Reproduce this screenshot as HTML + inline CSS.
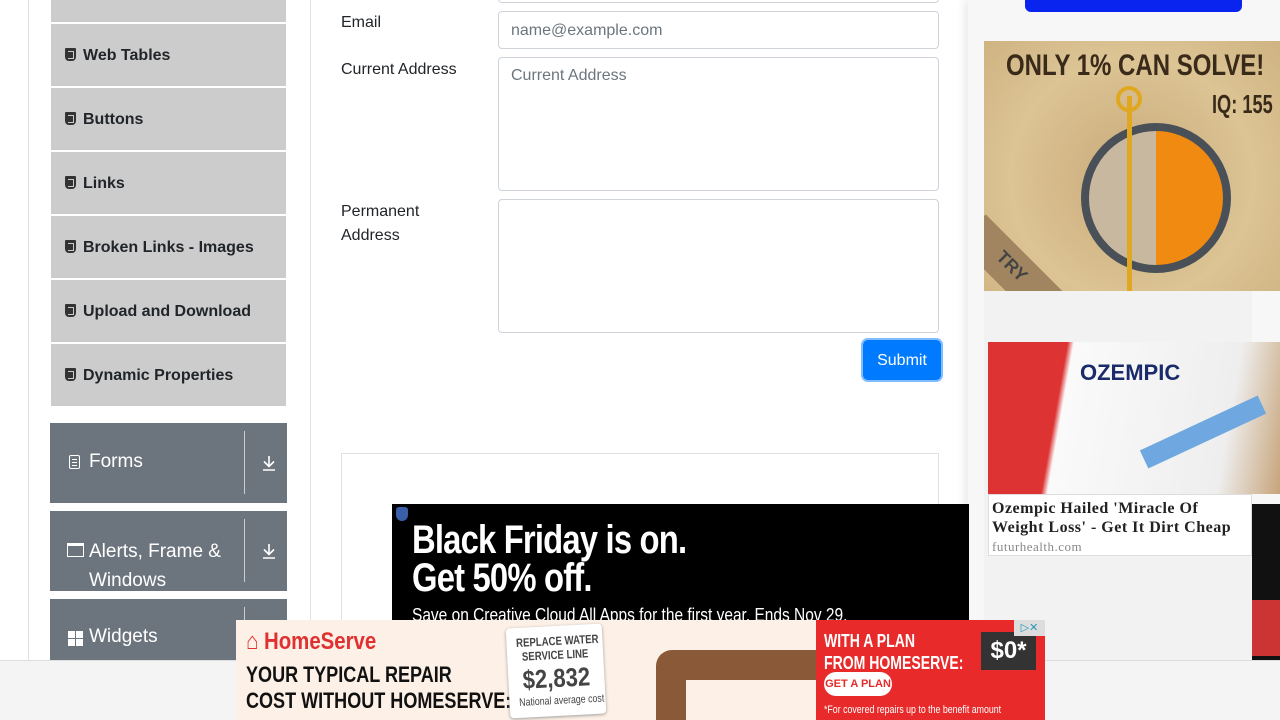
<!DOCTYPE html>
<html><head><meta charset="utf-8"><style>
*{box-sizing:border-box;margin:0;padding:0}
body{width:1280px;height:720px;overflow:hidden;background:#fff;font-family:"Liberation Sans",sans-serif;position:relative;color:#212529}
.abs{position:absolute}
.nar{transform-origin:0 0;white-space:nowrap}
.vl{position:absolute;top:0;width:1px;height:660px;background:#dee2e6}
.item{position:absolute;left:51px;width:235px;height:62px;background:#ccc;font-weight:bold;font-size:16px;line-height:64px;padding-left:14px;color:#212529}
.item .ic{display:inline-block;width:11px;height:13px;background:#333;border-radius:1px 1px 4px 4px;margin-right:7px;vertical-align:-1px;position:relative}
.item .ic:after{content:"";position:absolute;left:3px;top:3px;width:5px;height:6px;border:1.5px solid #ccc;border-left:none}
.grp{position:absolute;left:50px;width:237px;background:#6c757d;color:#fff;font-size:19px}
.grp .sep{position:absolute;left:194px;top:8px;width:1px;background:#ccc}
.grp svg{position:absolute;left:211px}
label{position:absolute;left:341px;font-size:16px;color:#212529;line-height:24px}
.in{position:absolute;left:498px;width:441px;border:1px solid #ced4da;border-radius:4px;background:#fff;color:#6c757d;font-size:16px;padding-left:12px}
</style></head><body>
<div class="vl" style="left:28px"></div>
<div class="vl" style="left:310px"></div>
<div class="item" style="top:-40px"></div>
<div class="item" style="top:24px"><span class="ic"></span>Web Tables</div>
<div class="item" style="top:88px"><span class="ic"></span>Buttons</div>
<div class="item" style="top:152px"><span class="ic"></span>Links</div>
<div class="item" style="top:216px"><span class="ic"></span>Broken Links - Images</div>
<div class="item" style="top:280px"><span class="ic"></span>Upload and Download</div>
<div class="item" style="top:344px"><span class="ic"></span>Dynamic Properties</div>

<div class="grp" style="top:423px;height:80px"><span class="abs" style="left:19px;top:32px;width:11px;height:14px;border:1.5px solid #fff;border-radius:2px;background:linear-gradient(#fff,#fff) 2px 3px/5px 1px no-repeat,linear-gradient(#fff,#fff) 2px 6px/5px 1px no-repeat,linear-gradient(#fff,#fff) 2px 9px/5px 1px no-repeat"></span><span class="abs" style="left:39px;top:28px">Forms</span><div class="sep" style="height:63px"></div><svg style="top:32px" width="16" height="16" viewBox="0 0 16 16" fill="none" stroke="#fff" stroke-width="1.6"><path d="M8 1v10M3 6.5l5 5 5-5M2 15h12"/></svg></div>
<div class="grp" style="top:511px;height:80px"><span class="abs" style="left:17px;top:32px;width:17px;height:14px;border:1.5px solid #fff;border-top-width:3px"></span><span class="abs" style="left:39px;top:26px;line-height:29px">Alerts, Frame &amp;<br>Windows</span><div class="sep" style="height:63px"></div><svg style="top:32px" width="16" height="16" viewBox="0 0 16 16" fill="none" stroke="#fff" stroke-width="1.6"><path d="M8 1v10M3 6.5l5 5 5-5M2 15h12"/></svg></div>
<div class="grp" style="top:599px;height:70px"><span class="abs" style="left:18px;top:32px;width:15px;height:15px;background:linear-gradient(#6c757d,#6c757d) 7px 0/1px 15px no-repeat,linear-gradient(#6c757d,#6c757d) 0 7px/15px 1px no-repeat,#fff"></span><span class="abs" style="left:39px;top:27px">Widgets</span><div class="sep" style="height:60px"></div></div>

<div class="in" style="top:-20px;height:23px"></div>
<label style="top:11px">Email</label>
<div class="in" style="top:11px;height:38px;line-height:38px">name@example.com</div>
<label style="top:58px">Current Address</label>
<div class="in" style="top:57px;height:134px;padding-top:9px">Current Address</div>
<label style="top:200px">Permanent<br>Address</label>
<div class="in" style="top:199px;height:134px"></div>
<div class="abs" style="left:863px;top:340px;width:78px;height:40px;border-radius:5px;background:#007bff;box-shadow:0 0 0 2px #80bdff;color:#fff;font-size:16px;text-align:center;line-height:42px">Submit</div>
<div class="abs" style="left:341px;top:453px;width:598px;height:220px;border:1px solid #dee2e6"></div>

<!-- right ad column -->
<div class="abs" style="left:968px;top:0;width:312px;height:660px;background:#f7f7f7;box-shadow:-4px 0 8px rgba(0,0,0,.08)"></div>
<div class="abs" style="left:1025px;top:-10px;width:217px;height:22px;background:#0a24f0;border-radius:6px"></div>
<div class="abs" style="left:984px;top:41px;width:296px;height:250px;background:radial-gradient(circle at 50% 55%,#c9a97a 0,#dcc494 60%,#cfb382 100%);overflow:hidden">
 <div class="abs nar" style="left:22px;top:8px;font:bold 30px sans-serif;color:#3a2a1a;transform:scaleX(.8)">ONLY 1% CAN SOLVE!</div>
 <div class="abs nar" style="left:228px;top:48px;font:bold 26px sans-serif;color:#3a2a1a;transform:scaleX(.7)">IQ: 155</div>
 <div class="abs" style="left:97px;top:82px;width:150px;height:150px;border-radius:50%;border:8px solid #4a5058;background:linear-gradient(90deg,#c8b8a0 50%,#f08a10 50%)"></div>
 <div class="abs" style="left:143px;top:55px;width:5px;height:200px;background:#e0a820"></div>
 <div class="abs" style="left:132px;top:45px;width:26px;height:26px;border:4px solid #e0a820;border-radius:50%"></div>
 <div class="abs" style="left:-30px;top:210px;width:120px;height:40px;background:#a08560;transform:rotate(45deg)"></div>
 <div class="abs" style="left:10px;top:215px;font:bold 18px sans-serif;color:#444;transform:rotate(45deg)">TRY</div>
</div>
<div class="abs" style="left:984px;top:291px;width:268px;height:369px;background:#f2f2f2"></div>
<div class="abs" style="left:988px;top:342px;width:292px;height:152px;background:linear-gradient(100deg,#d33 0,#d33 25%,#fafafa 27%,#eee 80%,#c7a47a 100%)">
 <div class="abs" style="left:92px;top:18px;font:bold 22px sans-serif;color:#1b2a6b">OZEMPIC</div>
 <div class="abs" style="left:150px;top:80px;width:130px;height:20px;background:#6fa8e0;transform:rotate(-25deg)"></div>
</div>
<div class="abs" style="left:988px;top:494px;width:264px;height:62px;background:#fff;border:1px solid #ddd;padding:4px 3px;font:bold 16px/19px 'Liberation Serif',serif;color:#222;white-space:nowrap;letter-spacing:.5px">Ozempic Hailed 'Miracle Of<br>Weight Loss' - Get It Dirt Cheap<div style="font:normal 13px 'Liberation Serif',serif;color:#888;margin-top:2px">futurhealth.com</div></div>
<div class="abs" style="left:1252px;top:504px;width:28px;height:156px;background:#111"></div>
<div class="abs" style="left:1252px;top:600px;width:28px;height:56px;background:#c33"></div>

<!-- Black Friday -->
<div class="abs" style="left:392px;top:504px;width:577px;height:156px;background:#000;color:#fff">
 <div class="abs" style="left:4px;top:3px;width:12px;height:14px;background:#3a5fa8;border-radius:3px 3px 6px 6px"></div>
 <div class="abs nar" style="left:20px;top:17px;font:bold 40px/38px sans-serif;letter-spacing:-1px;transform:scaleX(.82)">Black Friday is on.<br>Get 50% off.</div>
 <div class="abs nar" style="left:20px;top:101px;font:18px sans-serif;transform:scaleX(.86)">Save on Creative Cloud All Apps for the first year. Ends Nov 29.</div>
</div>
<div class="abs" style="left:0;top:660px;width:1280px;height:60px;background:#f4f4f4;border-top:1px solid #ddd"></div>

<!-- HomeServe -->
<div class="abs" style="left:236px;top:620px;width:809px;height:100px;background:#fdf0e6;overflow:hidden">
 <div class="abs nar" style="left:10px;top:8px;font:bold 24px sans-serif;color:#e03030;transform:scaleX(.85)">⌂ HomeServe</div>
 <div class="abs nar" style="left:10px;top:42px;font:bold 22px/26px sans-serif;color:#111;transform:scaleX(.82)">YOUR TYPICAL REPAIR<br>COST WITHOUT HOMESERVE:</div>
 <div class="abs" style="left:420px;top:30px;width:160px;height:30px;background:#8a5a38;border-radius:16px 0 0 0"></div>
 <div class="abs" style="left:420px;top:45px;width:30px;height:60px;background:#8a5a38"></div>
 <div class="abs" style="left:272px;top:6px;width:96px;height:90px;background:#fff;border-radius:4px;transform:rotate(-3deg);box-shadow:0 1px 3px #999;text-align:center;font:bold 12px/14px sans-serif;color:#444;padding-top:8px;white-space:nowrap;overflow:hidden"><div style="transform:scaleX(.8)">REPLACE WATER<br>SERVICE LINE</div><div style="font-size:26px;line-height:32px;transform:scaleX(.85)">$2,832</div><div style="font-weight:normal;font-size:11px;transform:scaleX(.8)">National average cost</div></div>
 <div class="abs" style="left:580px;top:0;width:229px;height:100px;background:#e82a2a;color:#fff">
  <div class="abs nar" style="left:8px;top:10px;font:bold 18px/22px sans-serif;transform:scaleX(.78)">WITH A PLAN<br>FROM HOMESERVE:</div>
  <div class="abs" style="left:165px;top:12px;width:55px;height:38px;background:#333;font:bold 24px/38px sans-serif;text-align:center">$0*</div>
  <div class="abs" style="left:198px;top:0;width:31px;height:16px;background:#ddd;color:#29b;font:11px/16px sans-serif;text-align:center">▷✕</div>
  <div class="abs" style="left:8px;top:52px;width:68px;height:24px;background:#fff;color:#e82a2a;border-radius:12px;font:bold 11px/24px sans-serif;text-align:center">GET A PLAN ›</div>
  <div class="abs nar" style="left:8px;top:84px;font:11px sans-serif;transform:scaleX(.8)">*For covered repairs up to the benefit amount</div>
 </div>
</div>
</body></html>
